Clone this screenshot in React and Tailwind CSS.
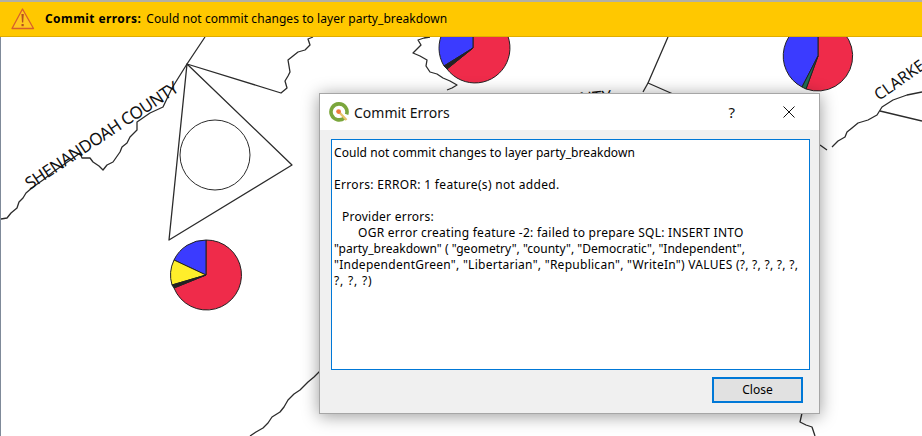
const lines = [
  { text: "Could not commit changes to layer party_breakdown", cls: "tracking-[0.06px]" },
  { text: " ", cls: "" },
  { text: "Errors: ERROR: 1 feature(s) not added.", cls: "tracking-[0.32px]" },
  { text: " ", cls: "" },
  { text: "Provider errors:", cls: "pl-[8px] tracking-[0.25px]" },
  { text: "OGR error creating feature -2: failed to prepare SQL: INSERT INTO", cls: "pl-[24px] tracking-[0.26px]" },
  { text: "\"party_breakdown\" ( \"geometry\", \"county\", \"Democratic\", \"Independent\",", cls: "tracking-[0.02px]" },
  { text: "\"IndependentGreen\", \"Libertarian\", \"Republican\", \"WriteIn\") VALUES (?, ?, ?, ?, ?,", cls: "tracking-[0.27px]" },
  { text: "?, ?, ?)", cls: "tracking-[0.8px]" },
];

const boundaries = [
  "M205,37 L187,64 L172,88 L163,107 L150,113 L137,122 L137,130 L130,137 L127,143 L122,147 L120,152 L113,162 L107,165 L103,170 L99,166 L93,162 L90,158 L82,158 L80,153 L66,163 L53,172 L43,180 L33,187 L26,193 L23,198 L19,202 L17,208 L11,213 L7,218 L1,219",
  "M187,64 L281,93 L287,88 L285,81 L288,76 L290,72 L289,66 L288,60 L293,56 L298,52 L305,50 L310,45 L308,39 L313,37",
  "M668,37 L648,83 L673,94",
  "M648,83 L643,92",
  "M430,37 L424,38 L418,40 L421,45 L413,53 L420,56 L427,60 L426,66 L430,72 L437,74 L443,78 L450,81 L457,85 L452,88 L447,90",
  "M922,92 L907,95 L893,100 L882,107 L877,115 L868,120 L858,123 L852,128 L847,132 L845,137 L838,141 L832,147",
  "M880,111 L922,121",
  "M820,145 L827,150",
  "M802,413 L800,422 L806,425 L812,427 L815,436",
  "M320,371 L314,377 L308,382 L300,390 L294,394 L288,400 L284,407 L280,412 L272,417 L268,423 L263,428 L256,432 L250,436",
];

function MapCanvas() {
  return (
    <svg className="absolute inset-0" width="922" height="436" viewBox="0 0 922 436" fill="none">
      <path d="M0.5,37 L0.5,436" stroke="#7f8a99" strokeWidth="1" />
      <g stroke="#2b2b2b" strokeWidth="1.3" strokeLinejoin="round">
        {boundaries.map(d => <path key={d} d={d} />)}
        <path d="M187,64 L169,240 L292,165 Z" />
      </g>
      <circle cx="215" cy="155" r="35" stroke="#2b2b2b" strokeWidth="1" />

      <g stroke="#222" strokeWidth="1">
        <path d="M206,275 L206,240 A35,35 0 1 1 174,288 Z" fill="#ef2b4a" />
        <path d="M206,275 L206,240 A35,35 0 0 0 174,260 Z" fill="#3b3bff" />
        <path d="M206,275 L174,260 A35,35 0 0 0 172,285 Z" fill="#ffee2b" />
        <path d="M206,275 L172,285 L174,288 Z" fill="#222" />

        <path d="M473,48 L473,13 A35,35 0 1 1 447,69 Z" fill="#ef2b4a" />
        <path d="M473,48 L473,13 A35,35 0 0 0 444,66 Z" fill="#3b3bff" />
        <path d="M473,48 L444,66 L447,69 Z" fill="#222" />

        <path d="M818,56 L818,21 A35,35 0 1 1 806,89 Z" fill="#ef2b4a" />
        <path d="M818,56 L818,21 A35,35 0 0 0 802,87 Z" fill="#3b3bff" />
        <path d="M818,56 L802,87 L806,89 Z" fill="#1f6f55" />
      </g>

      <g fill="#111" fontFamily="'Noto Sans', sans-serif" fontSize="17">
        <text transform="translate(30,190) rotate(-33.5)" textLength="180">SHENANDOAH COUNTY</text>
        <text transform="translate(498,112) rotate(-5)">PAGE COUNTY</text>
        <text transform="translate(879,101) rotate(-35)" fontSize="16">CLARKE</text>
      </g>
    </svg>
  );
}

function WarnIcon() {
  return (
    <svg width="24" height="22" viewBox="0 0 24 22" className="shrink-0">
      <path d="M11.5,1 L22.5,20.5 L1,20.5 Z" fill="#ffc81e" stroke="#d8602a" strokeWidth="1.3" strokeLinejoin="round" />
      <path d="M10.4,6 L12.8,6 L12.2,14.5 L11,14.5 Z" fill="#b4521e" />
      <rect x="10.5" y="16" width="2.2" height="2.2" fill="#b4521e" />
    </svg>
  );
}

function QgisIcon() {
  return (
    <svg width="20" height="20" viewBox="0 0 20 20" className="shrink-0">
      <path d="M15.4,15.8 A8,8 0 1 1 17.6,12.4" fill="none" stroke="#7ba63c" strokeWidth="3.6" />
      <path d="M10,10 L17.5,18" stroke="#e9c46a" strokeWidth="2.4" />
      <circle cx="9.6" cy="9.6" r="2.4" fill="#ee7a3c" />
    </svg>
  );
}

function CommitDialog() {
  return (
    <div className="absolute left-[319px] top-[93px] flex h-[321px] w-[501px] flex-col border border-[#a6a6a6] bg-[#f0f0f0] shadow-[0_2px_16px_rgba(0,0,0,0.4)]">
      <div className="flex h-[36px] items-center bg-white pl-[9px]">
        <QgisIcon />
        <span className="ml-[5px] text-[14px] text-[#111]">Commit Errors</span>
        <span className="ml-auto text-[15px] text-[#111]">?</span>
        <svg width="12" height="12" viewBox="0 0 12 12" className="ml-[48px] mr-[24px]">
          <path d="M0.5,0.5 L11.5,11.5 M11.5,0.5 L0.5,11.5" stroke="#111" strokeWidth="1" />
        </svg>
      </div>
      <div className="flex flex-1 flex-col pb-[10px] pl-[11px] pr-[9px] pt-[9px]">
        <div className="h-[231px] border border-[#0078d7] bg-white px-[2px] pt-[5px] text-[12px] leading-[16px] text-black">
          {lines.map((line, i) => (
            <div key={i} className={`whitespace-pre ${line.cls}`}>{line.text}</div>
          ))}
        </div>
        <div className="mt-[7px] flex justify-end pr-[7px]">
          <button className="h-[26px] w-[91px] border-2 border-[#0078d7] bg-[#e1e1e1] text-[12px] text-black">Close</button>
        </div>
      </div>
    </div>
  );
}

export default function App() {
  return (
    <div className="relative h-[436px] w-[922px] overflow-hidden bg-white font-['Noto_Sans',sans-serif]">
      <MapCanvas />
      <div className="relative flex h-[37px] items-center gap-[10px] border-t-2 border-b border-t-[#b3b0a4] border-b-[#e0ad00] bg-[#ffc800] pl-[11px] text-[12px] text-black">
        <WarnIcon />
        <div>
          <span className="font-bold tracking-[0.42px]">Commit errors:</span>
          <span className="ml-[5px] tracking-[0.06px]">Could not commit changes to layer party_breakdown</span>
        </div>
      </div>
      <CommitDialog />
    </div>
  );
}
